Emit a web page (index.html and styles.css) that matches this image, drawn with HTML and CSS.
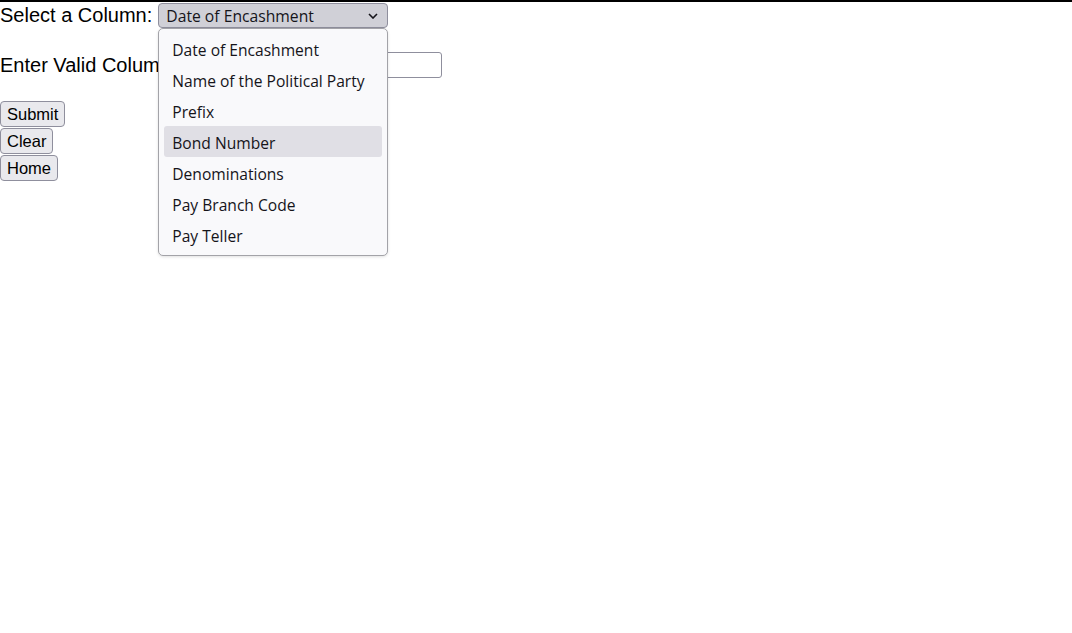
FILE: index.html
```html
<!DOCTYPE html>
<html lang="en">
<head>
<meta charset="utf-8">
<title>Search</title>
<link rel="stylesheet" href="styles.css">
</head>
<body>
<form class="form">
  <div class="row row-select">
    <span class="label">Select a Column:</span>
    <div class="select-wrap">
      <div class="select">
        <span class="select-value">Date of Encashment</span>
        <svg class="chevron" width="10" height="6" viewBox="0 0 10 6"><path d="M1 1l4 4 4-4" fill="none" stroke="#15141a" stroke-width="1.6"/></svg>
      </div>
      <ul class="popup">
        <li class="option">Date of Encashment</li>
        <li class="option">Name of the Political Party</li>
        <li class="option">Prefix</li>
        <li class="option option-hover">Bond Number</li>
        <li class="option">Denominations</li>
        <li class="option">Pay Branch Code</li>
        <li class="option">Pay Teller</li>
      </ul>
    </div>
  </div>
  <div class="row row-input">
    <span class="label">Enter Valid Column Value:</span>
    <input class="text-input" type="text">
  </div>
  <div class="buttons">
    <button class="btn" type="button">Submit</button>
    <button class="btn" type="button">Clear</button>
    <button class="btn" type="button">Home</button>
  </div>
</form>
</body>
</html>
```
FILE: styles.css
```css
html {
  height: 100%;
  margin: 0;
  padding: 0;
  background: #fff;
}

body {
  box-sizing: border-box;
  min-height: 100%;
  margin: 0;
  padding: 0;
  border-top: 2px solid #000;
  font-family: "Liberation Sans", Arial, sans-serif;
  color: #000;
  background: #fff;
}

.form {
  display: flex;
  flex-direction: column;
  align-items: flex-start;
}

.row {
  display: flex;
  align-items: center;
  gap: 6px;
}

.label {
  font-size: 20px;
  line-height: 23px;
  white-space: nowrap;
}

.row-select {
  height: 26px;
}

.row-input {
  margin-top: 23px;
  height: 27px;
}

.row-input .label {
  padding-top: 2px;
}

.select-wrap {
  position: relative;
  z-index: 2;
}

.select {
  box-sizing: border-box;
  width: 230px;
  height: 25px;
  margin-top: 1px;
  background: #d0d0d7;
  border: 1px solid #8f8f9d;
  border-radius: 4px;
  display: flex;
  align-items: center;
  justify-content: space-between;
  padding: 0 9px 0 7px;
  font-family: "Open Sans", "Noto Sans", sans-serif;
  font-size: 15.7px;
  color: #15141a;
}

.select-value {
  line-height: 20px;
}

.chevron {
  display: block;
  margin-top: 1px;
}

.popup {
  position: absolute;
  left: 0;
  top: 26px;
  box-sizing: border-box;
  width: 230px;
  margin: 0;
  padding: 4px 5px 5px;
  list-style: none;
  background: #f9f9fb;
  border: 1px solid #a3a3a8;
  border-radius: 5px;
  box-shadow: 0 1px 3px rgba(0, 0, 0, 0.12);
  font-family: "Open Sans", "Noto Sans", sans-serif;
  font-size: 15.6px;
  color: #15141a;
}

.option {
  box-sizing: border-box;
  height: 31px;
  padding: 4px 0 0 8px;
  line-height: 27px;
  border-radius: 3px;
  white-space: nowrap;
}

.option-hover {
  background: #e0dfe5;
}

.text-input {
  box-sizing: border-box;
  width: 204px;
  height: 26px;
  margin: 0;
  border: 1px solid #8f8f9d;
  border-radius: 3px;
  background: #fff;
  padding: 0 4px;
}

.buttons {
  display: flex;
  flex-direction: column;
  align-items: flex-start;
  gap: 1px;
  margin-top: 23px;
}

.btn {
  box-sizing: border-box;
  height: 26px;
  margin: 0;
  padding: 0 6px;
  background: #e9e9ed;
  border: 1px solid #8f8f9d;
  border-radius: 4px;
  font-family: "Liberation Sans", Arial, sans-serif;
  font-size: 16.5px;
  line-height: 20px;
  color: #000;
}
```
